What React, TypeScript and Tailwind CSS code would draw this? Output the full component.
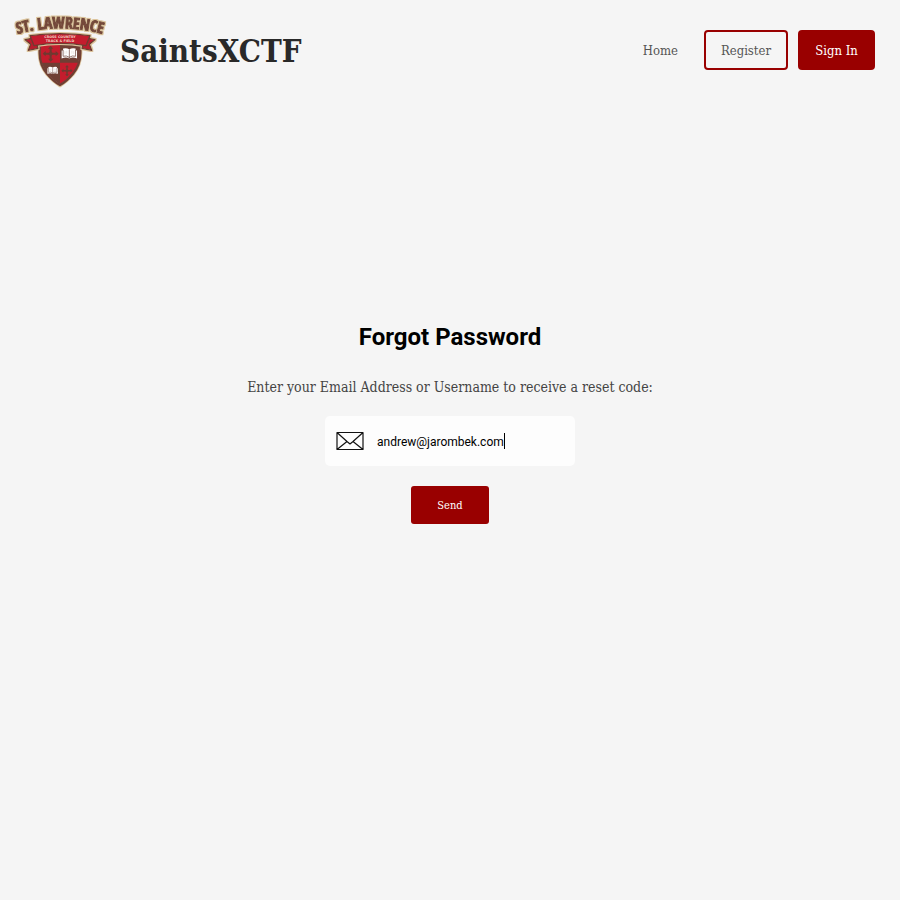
import React, { useState } from "react";

const slab = "font-['Roboto_Slab','DejaVu_Serif_Condensed','DejaVu_Serif',serif]";
const sans = "font-[Roboto,'Liberation_Sans',sans-serif]";

function Cross({ x, y, r }: { x: number; y: number; r: number }) {
  return (
    <g transform={`translate(${x} ${y}) scale(${r / 24})`} fill="none" stroke="#6f3a30" strokeWidth="6">
      <path d="M0-20V20M-20 0H20" />
      <path d="M-8-15 0-24 8-15ZM-8 15 0 24 8 15ZM-15-8-24 0-15 8ZM15-8 24 0 15 8Z" fill="#6f3a30" stroke="none" />
      <path d="M0-8 8 0 0 8-8 0Z" fill="#6f3a30" stroke="none" />
    </g>
  );
}

function Book({ x, y, s }: { x: number; y: number; s: number }) {
  return (
    <g transform={`translate(${x} ${y}) scale(${s})`}>
      <path d="M-21-8V14Q-9 9 0 14 9 9 21 14V-8H17V-13Q8-16 0-11-8-16-17-13V-8Z" fill="#fff" />
      <path d="M0-11V14M-17-9V8Q-8 5 0 11 8 5 17 8V-9" fill="none" stroke="#6f4a40" strokeWidth="2" />
      <path d="M-12-6V2M-7-7V1M7-7V1M12-6V2" stroke="#c9bcb2" strokeWidth="1" />
    </g>
  );
}

function Logo() {
  return (
    <svg viewBox="0 0 300 270" className="h-[90px] w-[100px] shrink-0" role="img" aria-label="St. Lawrence Cross Country Track and Field">
      <defs>
        <path id="arch" d="M8 91Q150 48 292 91" />
        <filter id="halo" x="-10%" y="-20%" width="120%" height="140%">
          <feMorphology in="SourceAlpha" operator="dilate" radius="3" result="grown" />
          <feFlood floodColor="#dcc49c" />
          <feComposite in2="grown" operator="in" />
          <feMerge>
            <feMergeNode />
            <feMergeNode in="SourceGraphic" />
          </feMerge>
        </filter>
        <clipPath id="shield">
          <path d="M87 105H213V145Q213 180 190 208 170 231 150 243 130 231 110 208 87 180 87 145Z" />
        </clipPath>
      </defs>
      <path d="M87 108V145Q87 180 110 208 130 231 150 243 170 231 190 208 213 180 213 145V108Z" fill="#6f3f34" stroke="#dcc49c" strokeWidth="8" strokeLinejoin="round" />
      <g clipPath="url(#shield)">
        <path d="M92 105H150V173H92Z" fill="#c41d2d" />
        <path d="M150 173H207V200L150 236Z" fill="#c41d2d" />
      </g>
      <path d="M89 112V145Q89 180 111 206 130 229 150 240 170 229 189 206 211 180 211 145V112" fill="none" stroke="#6f3f34" strokeWidth="7" />
      <Cross x={122} y={146} r={24} />
      <Cross x={171} y={197} r={17} />
      <Book x={178} y={145} s={1.1} />
      <Book x={128} y={196} s={0.75} />
      <g filter="url(#halo)" stroke="#6f3a30" strokeWidth="4" strokeLinejoin="round">
        <path d="M45 104 76 98 84 130 55 136 62 118Z" fill="#b91f2d" />
        <path d="M255 104 224 98 216 130 245 136 238 118Z" fill="#b91f2d" />
        <path d="M60 92Q150 80 240 92L228 122Q150 108 72 122Z" fill="#c41d2d" />
      </g>
      <g className="font-['DejaVu_Sans',sans-serif] font-bold" fill="#f1d5c4" fontSize="10" textAnchor="middle">
        <text x="150" y="99">CROSS COUNTRY</text>
        <text x="150" y="111">TRACK &amp; FIELD</text>
      </g>
      <text
        className="font-['Open_Sans_Condensed','Noto_Sans_ExtraCondensed','Liberation_Sans',sans-serif] font-bold"
        fontSize="47"
        textAnchor="middle"
        strokeLinejoin="miter"
        fill="#74483a"
        stroke="#74483a"
        strokeWidth="3"
        filter="url(#halo)"
      >
        <textPath href="#arch" startOffset="50%">ST. LAWRENCE</textPath>
      </text>
    </svg>
  );
}

export default function App() {
  const [value, setValue] = useState("andrew@jarombek.com");
  return (
    <div className={`flex min-h-screen flex-col bg-[#f5f5f5] ${slab}`}>
      <header className="flex h-[100px] items-center justify-between pr-[25px] pl-[10px]">
        <a href="#" className="flex items-center gap-[10px]">
          <Logo />
          <h1 className="pt-0.5 text-[31px] font-bold text-[#292929]">SaintsXCTF</h1>
        </a>
        <nav className="flex items-center gap-[10px] text-[13px]">
          <button className="h-10 px-4 pt-0.5 text-[#555]">Home</button>
          <button className="h-10 w-[84px] rounded border-2 border-[#990000] pt-0.5 text-[#555]">Register</button>
          <button className="h-10 w-[77px] rounded bg-[#990000] pt-0.5 text-white">Sign In</button>
        </nav>
      </header>
      <main className="flex flex-col items-center pt-[221px]">
        <h2 className={`text-2xl font-bold text-black ${sans}`}>Forgot Password</h2>
        <label htmlFor="account" className="mt-6 text-[14px] leading-5 text-[#444]">
          Enter your Email Address or Username to receive a reset code:
        </label>
        <div className="mt-[19px] flex h-[50px] w-[250px] items-center rounded-[5px] bg-[#fdfdfd] pl-[11px]">
          <svg viewBox="0 0 28 20" className="mr-[13px] h-5 w-7 shrink-0" fill="none" stroke="#111" strokeWidth="1.2" strokeLinejoin="round" aria-hidden="true">
            <path d="M1 1.5H27V18.5H1ZM1 1.5 11 10.5 14 13 17 10.5 27 1.5M1 18.5 11 10.5M27 18.5 17 10.5" />
          </svg>
          <input id="account" type="text" value={value} onChange={(e) => setValue(e.target.value)} className={`max-w-[180px] [field-sizing:content] pt-0.5 text-[12px] text-black outline-none ${sans}`} />
          <span className="h-4 w-px bg-black" />
        </div>
        <button className="mt-5 h-[38px] w-[78px] rounded-[3px] bg-[#990000] pt-0.5 text-[11px] text-white">Send</button>
      </main>
    </div>
  );
}
